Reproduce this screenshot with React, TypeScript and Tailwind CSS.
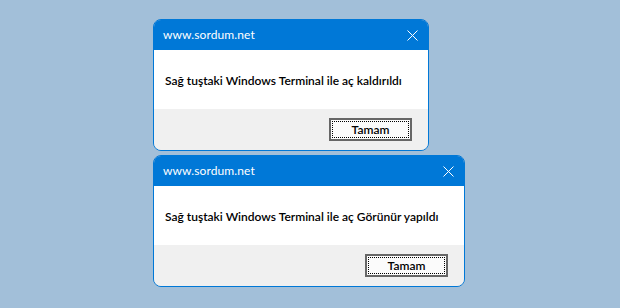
import React from "react";

const font = { fontFamily: 'Lato, "Open Sans", sans-serif' };

interface MessageBoxProps {
  title: string;
  message: string;
  width: string;
}

const MessageBox = ({ title, message, width }: MessageBoxProps) => {
  return (
    <div className={`${width} flex flex-col rounded-lg border border-[#0078d7] overflow-hidden`}>
      <div className="h-[30px] bg-[#0078d7] flex items-center justify-between pl-[9px] pr-[9px]">
        <span className="text-white text-[12px] tracking-[0.1px] leading-none">{title}</span>
        <svg width="11" height="11" viewBox="0 0 11 11" className="mr-[1px]">
          <path d="M0.5 0.5 L10.5 10.5 M10.5 0.5 L0.5 10.5" stroke="#ffffff" strokeWidth="1" />
        </svg>
      </div>
      <div className="h-[59px] bg-white flex items-center pl-[11px] pt-[3px]">
        <span className="text-black text-[12px] font-semibold leading-none whitespace-nowrap">{message}</span>
      </div>
      <div className="h-[41px] bg-[#f0f0f0] flex items-center justify-end pr-[16px]">
        <button className="w-[83px] h-[23px] border-2 border-[#666666] bg-[#fbfbfb] p-[1px] flex">
          <span className="flex-1 border border-dotted border-black flex items-center justify-center text-[12px] font-semibold text-black leading-none">
            Tamam
          </span>
        </button>
      </div>
    </div>
  );
};

export default function App() {
  return (
    <div className="w-[620px] h-[308px] bg-[#a2bfd9] pl-[153px] pt-[19px] flex flex-col gap-[4px]" style={font}>
      <MessageBox
        title="www.sordum.net"
        message="Sağ tuştaki Windows Terminal ile aç kaldırıldı"
        width="w-[276px]"
      />
      <MessageBox
        title="www.sordum.net"
        message="Sağ tuştaki Windows Terminal ile aç Görünür yapıldı"
        width="w-[312px]"
      />
    </div>
  );
}
